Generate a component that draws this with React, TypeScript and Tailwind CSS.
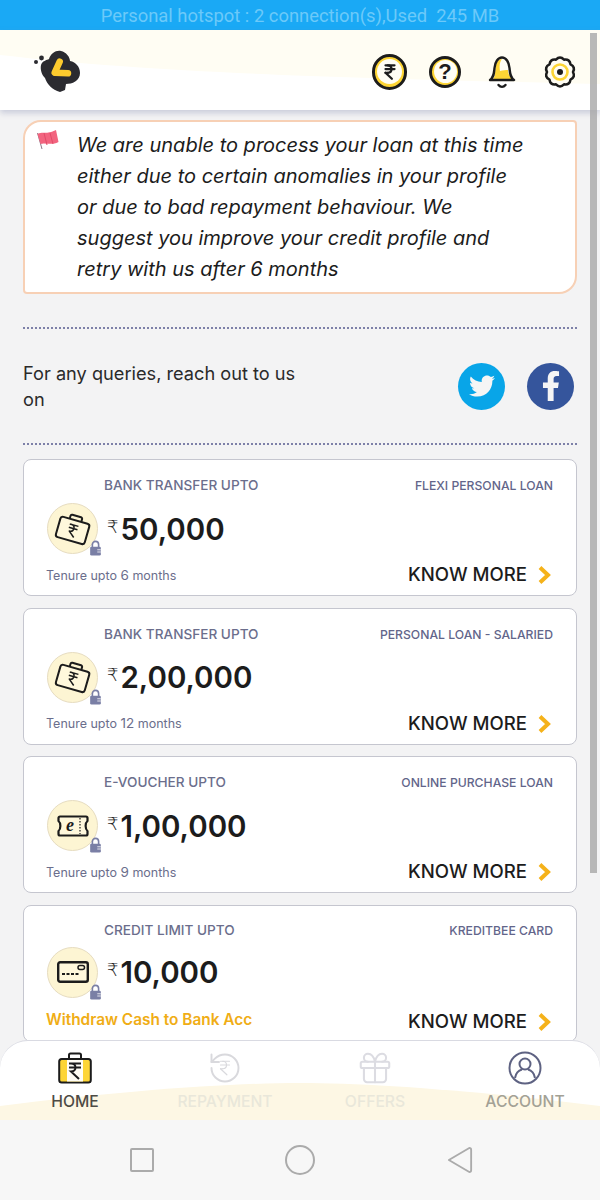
import * as React from 'react'
import { IndianRupee, Gift, RotateCcw } from 'lucide-react'
import { FaTwitter, FaFacebookF } from 'react-icons/fa'

const BODY = "font-['Inter','Liberation_Sans',sans-serif]"

// ---------------------------------------------------------------------------
// Loan offers
// ---------------------------------------------------------------------------

interface Offer {
  heading: string
  product: string
  amount: string
  icon: 'bag' | 'voucher' | 'card'
  tenure?: string
}

const offers: Offer[] = [
  { heading: 'BANK TRANSFER UPTO', product: 'FLEXI PERSONAL LOAN', amount: '50,000', icon: 'bag', tenure: '6' },
  { heading: 'BANK TRANSFER UPTO', product: 'PERSONAL LOAN - SALARIED', amount: '2,00,000', icon: 'bag', tenure: '12' },
  { heading: 'E-VOUCHER UPTO', product: 'ONLINE PURCHASE LOAN', amount: '1,00,000', icon: 'voucher', tenure: '9' },
  { heading: 'CREDIT LIMIT UPTO', product: 'KREDITBEE CARD', amount: '10,000', icon: 'card' },
]

// ---------------------------------------------------------------------------
// Icons
// ---------------------------------------------------------------------------

function Logo() {
  return (
    <svg className="mt-[-2px]" width="50" height="46" viewBox="0 0 50 46">
      <circle cx="2" cy="14" r="2" fill="#2b2b30" />
      <circle cx="7.500" cy="10" r="2.400" fill="#2b2b30" />
      <path d="M7 17C8 13 13 12 15 11 17 5 22 2 27 3 32 4 36 9 36 13 42 14 46 19 46 25 46 33 38 36 32 36L31 42 26 44C18 42 13 36 11 30 8 27 6 22 7 17z" fill="#2b2b30" />
      <path d="M25.700 13.700L20.700 24.700 34 25.300" fill="none" stroke="#fdcb2e" strokeWidth="6.500" strokeLinecap="round" strokeLinejoin="round" />
    </svg>
  )
}

function CoinIcon() {
  return (
    <div className="flex h-[36px] w-[35px] items-center justify-center rounded-full border-[3px] border-[#1c1c1c] bg-[#fdd535]">
      <div className="flex h-[25px] w-[25px] items-center justify-center rounded-full bg-[#fffdf4]">
        <IndianRupee size={18} strokeWidth={3} color="#1c1c1c" />
      </div>
    </div>
  )
}

function HelpIcon() {
  return (
    <div className="flex h-[32px] w-[32px] items-center justify-center rounded-full border-[3px] border-[#1c1c1c] bg-[#fdd535]">
      <div className="flex h-[23px] w-[23px] items-center justify-center rounded-full bg-[#fffdf4] font-['Liberation_Sans',sans-serif] text-[22px] font-bold text-[#1c1c1c]">
        ?
      </div>
    </div>
  )
}

function BellIcon() {
  return (
    <svg width="28" height="34" viewBox="0 0 28 34">
      <path d="M3 24c3-3 3-6 3.500-11C7 7 10 3 14 3s7 4 7.500 10c.5 5 .5 8 3.500 11z" fill="#fffdf4" />
      <path d="M5 24c2-2 2-5 2.500-11C8 8 10 4 14 4c-2 2-3 7-2 12 3-1 6-1 8-1 0 4 2 7 4 9z" fill="#fdd535" />
      <path d="M2 25c4-3 4-7 4.500-12C7 7 10 2.500 14 2.500S21 7 21.500 13c.5 5 .5 9 4.500 12z" fill="none" stroke="#1c1c1c" strokeWidth="2.400" strokeLinejoin="round" />
      <path d="M10.500 30c2 2.500 5 2.500 7 0" fill="none" stroke="#1c1c1c" strokeWidth="2.400" strokeLinecap="round" />
    </svg>
  )
}

function GearIcon() {
  const teeth = 10
  const points: string[] = []
  for (let i = 0; i < teeth; i++) {
    const a = (i / teeth) * Math.PI * 2
    const b = ((i + 1) / teeth) * Math.PI * 2
    const mid = (a + b) / 2
    const sx = 16 + 13 * Math.cos(a)
    const sy = 16 + 13 * Math.sin(a)
    const cx = 16 + 16.5 * Math.cos(mid)
    const cy = 16 + 16.5 * Math.sin(mid)
    const ex = 16 + 13 * Math.cos(b)
    const ey = 16 + 13 * Math.sin(b)
    points.push(`${i === 0 ? `M${sx} ${sy}` : ''}Q${cx} ${cy} ${ex} ${ey}`)
  }
  return (
    <svg width="32" height="34" viewBox="0 0 32 32">
      <path d={points.join('') + 'Z'} fill="#fffdf4" stroke="#1c1c1c" strokeWidth="2.600" strokeLinejoin="round" />
      <circle cx="16" cy="16" r="7.500" fill="#fffdf4" stroke="#fdd535" strokeWidth="2.600" />
      <circle cx="16" cy="16" r="3" fill="#1c1c1c" />
    </svg>
  )
}

function BagGlyph() {
  return (
    <svg width="38" height="34" viewBox="0 0 38 34">
      <g transform="rotate(16 19 17)" fill="none" stroke="#1c1c1c" strokeWidth="2" strokeLinejoin="round">
        <rect x="4" y="8" width="30" height="21" rx="2.500" fill="#fff8dc" />
        <path d="M13 8V5a1.500 1.500 0 0 1 1.500-1.500h9A1.500 1.500 0 0 1 25 5v3" />
        <path d="M14.500 13h9M14.500 16.500h9M16 13c5 0 5 7 0 7l6 5" strokeWidth="1.500" />
      </g>
    </svg>
  )
}

function VoucherGlyph() {
  return (
    <svg width="32" height="22" viewBox="0 0 32 22">
      <path d="M3 1.500h26a1.500 1.500 0 0 1 1.500 1.500v3c-2.500 2-2.500 8 0 10v3a1.500 1.500 0 0 1-1.500 1.500H3A1.500 1.500 0 0 1 1.500 19v-3c2.500-2 2.500-8 0-10V3A1.500 1.500 0 0 1 3 1.500z" fill="#fff8dc" stroke="#1c1c1c" strokeWidth="2.200" strokeLinejoin="round" />
      <path d="M23 3v16" stroke="#1c1c1c" strokeWidth="1.200" strokeDasharray="1.500 1.500" />
      <text x="13" y="16" textAnchor="middle" fontFamily="'Liberation Serif', serif" fontStyle="italic" fontWeight="700" fontSize="18" fill="#1c1c1c">e</text>
    </svg>
  )
}

function CardGlyph() {
  return (
    <svg width="32" height="22" viewBox="0 0 32 22">
      <rect x="1.200" y="1.200" width="29.600" height="19.600" rx="2" fill="#fff8dc" stroke="#1c1c1c" strokeWidth="2.400" />
      <path d="M5 13h17" stroke="#1c1c1c" strokeWidth="1.800" strokeDasharray="3 1.500" />
      <rect x="21" y="4.500" width="6.500" height="4" rx="2" fill="none" stroke="#1c1c1c" strokeWidth="1.500" />
    </svg>
  )
}

function LockBadge() {
  return (
    <svg className="absolute bottom-[-3px] right-[-5px]" width="13" height="16" viewBox="0 0 14 18">
      <path d="M3.500 8V5a3.500 3.500 0 0 1 7 0v3" fill="none" stroke="#7a7fa5" strokeWidth="1.800" />
      <rect x="1" y="7.500" width="12" height="10" rx="1.500" fill="#7a7fa5" />
      <path d="M9 11h4M9 13.500h4" stroke="#f0f0f4" strokeWidth="1" />
    </svg>
  )
}

function OfferIcon({ type }: { type: Offer['icon'] }) {
  return (
    <div className="relative flex h-[51px] w-[51px] shrink-0 items-center justify-center rounded-full border border-[#e6dcc0] bg-[#fdf5d3]">
      {type === 'bag' && <BagGlyph />}
      {type === 'voucher' && <VoucherGlyph />}
      {type === 'card' && <CardGlyph />}
      <LockBadge />
    </div>
  )
}

function HomeBag() {
  return (
    <svg width="34" height="32" viewBox="0 0 34 32">
      <path d="M11 7V3a1.500 1.500 0 0 1 1.500-1.500h9A1.500 1.500 0 0 1 23 3v4" fill="none" stroke="#1c1c1c" strokeWidth="2" />
      <rect x="1.200" y="7" width="31.600" height="23.500" rx="2.500" fill="#fdd535" stroke="#1c1c1c" strokeWidth="2" />
      <rect x="9" y="8" width="16" height="21.500" fill="#fffdf4" />
      <path d="M11 11.500h12M11 15.500h12M13 11.500c6 0 6 8 0 8l8 7.500" fill="none" stroke="#1c1c1c" strokeWidth="2" />
    </svg>
  )
}

function AccountIcon() {
  return (
    <svg width="34" height="34" viewBox="0 0 34 34" fill="none" stroke="#5e6282" strokeWidth="2">
      <circle cx="17" cy="17" r="15.500" />
      <circle cx="17" cy="13" r="5.500" />
      <path d="M7 27c1-6 5-8 7-8.500M27 27c-1-6-5-8-7-8.500" />
    </svg>
  )
}

function Chevron() {
  return (
    <svg className="ml-[11px]" width="13" height="18" viewBox="0 0 13 18">
      <path d="M2 1.500L10 9 2 16.500" fill="none" stroke="#f5b21a" strokeWidth="4" strokeLinejoin="miter" />
    </svg>
  )
}

// ---------------------------------------------------------------------------
// Sections
// ---------------------------------------------------------------------------

function OfferCard({ offer }: { offer: Offer }) {
  return (
    <article className="flex h-[137px] flex-col rounded-lg border border-[#c5c6cf] bg-white pl-[22px] pr-[25px] pt-[15px]">
      <div className={`flex items-start justify-between ${offer.tenure ? '' : '-mt-[1px]'}`}>
        <span className="ml-[58px] text-[13.600px] font-medium text-[#6b6e8c]">{offer.heading}</span>
        <span className="-mr-[2px] mt-[2px] text-[12.200px] font-medium text-[#62658a]">{offer.product}</span>
      </div>
      <div className={`flex items-center ${offer.tenure ? 'mt-[8px]' : 'mt-[7px]'}`}>
        <div className="ml-[1px]">
          <OfferIcon type={offer.icon} />
        </div>
        <span className="ml-[9px] flex items-start text-[#1c1c1c]">
          <span className="mr-[2px] mt-[3px] font-['DejaVu_Sans',sans-serif] text-[18px] font-light">₹</span>
          <span className="text-[29.500px] font-semibold leading-[38px]">{offer.amount}</span>
        </span>
      </div>
      <div className={`flex items-center justify-between ${offer.tenure ? 'mt-[7px]' : 'mt-[10px]'}`}>
        {offer.tenure ? (
          <span className="text-[12.500px] text-[#6b6e8c]">
            Tenure upto <span className="text-[13.500px]">{offer.tenure}</span> months
          </span>
        ) : (
          <span className="mb-[4px] text-[15.400px] font-semibold leading-[18px] text-[#f0ad15]">Withdraw Cash to Bank Acc</span>
        )}
        <span className="flex items-center text-[18.600px] font-medium text-[#1c1c1c]">
          KNOW MORE
          <Chevron />
        </span>
      </div>
    </article>
  )
}

function NavItem({ label, tone, children }: { label: string; tone: 'active' | 'muted' | 'dim'; children: React.ReactNode }) {
  const toneClass = tone === 'active' ? 'text-[#4d4b45]' : tone === 'muted' ? 'text-[#a3a195]' : 'text-[#e9e7da]'
  return (
    <div className="z-10 flex flex-col items-center">
      <div className="flex h-[34px] items-center">{children}</div>
      <span className={`mt-[8px] text-[15.700px] font-medium leading-[18px] ${toneClass}`}>{label}</span>
    </div>
  )
}

export default function App() {
  return (
    <div className={`relative flex h-[1200px] w-[600px] flex-col overflow-hidden bg-[#f3f3f4] ${BODY}`}>
      {/* Status bar */}
      <div className="flex h-[30px] items-center justify-center bg-[#1aa9f5] pt-[1px] font-['Roboto',sans-serif] text-[18.400px] text-[#6cc9f9]">
        Personal hotspot : 2 connection(s),Used&nbsp; 245 MB
      </div>

      {/* Top bar */}
      <header className="relative z-10 flex h-[80px] shrink-0 items-center justify-between overflow-hidden bg-white pl-[34px] pr-[24px] pt-[3px] shadow-[0_3px_6px_rgba(120,130,170,0.35)]">
        <svg className="absolute inset-0" width="600" height="80" viewBox="0 0 600 80" preserveAspectRatio="none">
          <path d="M0 25C150 42 300 47 600 54V0H0z" fill="#fffdf3" />
        </svg>
        <div className="relative">
          <Logo />
        </div>
        <div className="relative flex items-center">
          <CoinIcon />
          <div className="ml-[22px]"><HelpIcon /></div>
          <div className="ml-[27px]"><BellIcon /></div>
          <div className="ml-[28px]"><GearIcon /></div>
        </div>
      </header>

      {/* Scroll thumb, drawn over the top bar and the content */}
      <div className="absolute left-[590px] top-[33px] z-30 h-[840px] w-[7px] bg-[#a8a8a8]/80" />

      {/* Scrolling content */}
      <main className="relative h-[932px] shrink-0 overflow-hidden px-[23px] pt-[10px]">
        <section className="relative flex h-[174px] rounded-bl-[4px] rounded-br-[18px] rounded-tl-[18px] rounded-tr-[4px] border-2 border-[#f7d0b5] bg-white pl-[52px] pt-[8px]">
          <svg className="absolute left-[11px] top-[7px]" width="24" height="24" viewBox="0 0 24 24">
            <path d="M6 20L1.500 4" stroke="#8a7a8a" strokeWidth="1" />
            <path d="M1.500 5C7 2 10 6 20 1l2.500 12C15 17 9 13 4.500 15z" fill="#f2647f" />
            <path d="M8 4l3 12M14 4l3 11" stroke="#e24a68" strokeWidth="1" />
          </svg>
          <p className="w-[450px] text-[20px] italic leading-[31px] text-[#1c1c1c]">
            We are unable to process your loan at this time either due to certain anomalies in your profile or due to bad repayment behaviour. We suggest you improve your credit profile and retry with us after 6 months
          </p>
        </section>

        <div className="mt-[33px] border-t-2 border-dotted border-[#7d80a8]" />

        <section className="flex h-[114px] items-center justify-between pr-[3px]">
          <p className="-mt-[1px] w-[295px] text-[18.200px] leading-[26px] text-[#2a2a2a]">For any queries, reach out to us on</p>
          <div className="flex gap-[22px]">
            <span className="flex h-[47px] w-[47px] items-center justify-center rounded-full bg-[#08a5e8] text-[26px] text-[#f5f5f5]">
              <FaTwitter />
            </span>
            <span className="flex h-[47px] w-[47px] items-center justify-center rounded-full bg-[#35559c] text-[30px] text-[#f5f5f5]">
              <FaFacebookF />
            </span>
          </div>
        </section>

        <div className="border-t-2 border-dotted border-[#7d80a8]" />

        <div className="mt-[14px] flex flex-col gap-[11.500px]">
          {offers.map((offer) => (
            <OfferCard key={offer.product} offer={offer} />
          ))}
        </div>
      </main>

      {/* Bottom tabs */}
      <nav className="relative z-20 -mt-[2px] grid h-[80px] shrink-0 grid-cols-4 overflow-hidden rounded-t-[28px] border-t border-[#d9dae2] bg-white pt-[10px]">
        <svg className="absolute inset-0" width="600" height="80" viewBox="0 0 600 80" preserveAspectRatio="none">
          <path d="M0 65C120 50 230 42 300 42S480 50 600 65V80H0z" fill="#fdf7e4" />
        </svg>
        <NavItem label="HOME" tone="active"><HomeBag /></NavItem>
        <NavItem label="REPAYMENT" tone="dim">
          <span className="relative flex h-[34px] w-[34px] items-center justify-center">
            <RotateCcw size={36} strokeWidth={1.300} color="#d9d9dd" className="absolute" />
            <IndianRupee size={18} strokeWidth={1.600} color="#d9d9dd" />
          </span>
        </NavItem>
        <NavItem label="OFFERS" tone="dim"><Gift size={38} strokeWidth={1.300} color="#dcdce2" /></NavItem>
        <NavItem label="ACCOUNT" tone="muted"><AccountIcon /></NavItem>
      </nav>

      {/* Android navigation keys */}
      <div className="flex h-[80px] shrink-0 justify-center bg-[#f7f7f7]">
        <div className="grid w-[480px] grid-cols-3 items-center">
          <div className="flex justify-center">
            <div className="ml-[3px] h-[24px] w-[24px] rounded-[2px] border-2 border-[#ababab]" />
          </div>
          <div className="flex justify-center">
            <div className="h-[30px] w-[30px] rounded-full border-2 border-[#ababab]" />
          </div>
          <div className="flex justify-center">
            <svg width="26" height="30" viewBox="0 0 28 30">
              <path d="M2 15L24 2c1 0 2 .5 2 2v22c0 1.500-1 2-2 2z" fill="none" stroke="#ababab" strokeWidth="2" strokeLinejoin="round" />
            </svg>
          </div>
        </div>
      </div>
    </div>
  )
}
